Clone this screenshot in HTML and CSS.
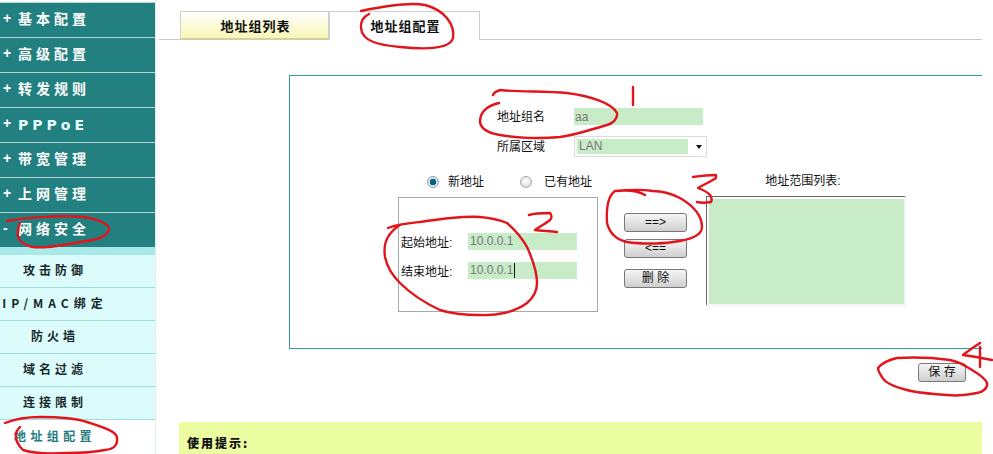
FILE: index.html
```html
<!DOCTYPE html>
<html lang="zh-CN">
<head>
<meta charset="utf-8">
<title>地址组配置</title>
<link rel="stylesheet" href="styles.css">
</head>
<body>
<div class="page">
  <nav class="sidebar">
    <a class="nav-item"><span class="sign">+</span><span>基本配置</span></a>
    <a class="nav-item"><span class="sign">+</span><span>高级配置</span></a>
    <a class="nav-item"><span class="sign">+</span><span>转发规则</span></a>
    <a class="nav-item"><span class="sign">+</span><span class="latin">PPPoE</span></a>
    <a class="nav-item"><span class="sign">+</span><span>带宽管理</span></a>
    <a class="nav-item"><span class="sign">+</span><span>上网管理</span></a>
    <a class="nav-item"><span class="sign">-</span><span>网络安全</span></a>
    <div class="nav-band"></div>
    <a class="sub-item">攻击防御</a>
    <a class="sub-item wide-text">IP/MAC绑定</a>
    <a class="sub-item">防火墙</a>
    <a class="sub-item">域名过滤</a>
    <a class="sub-item">连接限制</a>
    <a class="sub-item current">地址组配置</a>
  </nav>
  <main class="content">
    <div class="tabs">
      <a class="tab inactive">地址组列表</a>
      <a class="tab active">地址组配置</a>
    </div>
    <section class="panel">
      <div class="row name-row">
        <label class="field-label">地址组名</label>
        <input class="name-input" type="text" value="aa">
      </div>
      <div class="row zone-row">
        <label class="field-label">所属区域</label>
        <div class="select"><span class="select-value">LAN</span><span class="select-arrow"></span></div>
      </div>
      <div class="columns">
        <div class="col-left">
          <div class="radios">
            <span class="radio on"></span><span class="radio-text first">新地址</span>
            <span class="radio"></span><span class="radio-text">已有地址</span>
          </div>
          <div class="addr-box">
            <div class="addr-row"><label>起始地址:</label><input class="addr-input" type="text" value="10.0.0.1"></div>
            <div class="addr-row"><label>结束地址:</label><div class="addr-input caret-field">10.0.0.1<i class="caret"></i></div></div>
          </div>
        </div>
        <div class="col-buttons">
          <button class="btn" type="button">==&gt;</button>
          <button class="btn" type="button">&lt;==</button>
          <button class="btn wide" type="button">删 除</button>
        </div>
        <div class="col-list">
          <div class="list-title">地址范围列表:</div>
          <div class="list-box"></div>
        </div>
      </div>
    </section>
    <div class="save-row"><button class="btn save" type="button">保 存</button></div>
    <div class="tips"><strong>使用提示:</strong></div>
  </main>
</div>
<svg class="marks" width="993" height="454" viewBox="0 0 993 454" fill="none" stroke="#e2141c" stroke-width="2.4" stroke-linecap="round" stroke-linejoin="round" aria-hidden="true">
  <path d="M361 11C380 7 410 2 425 5C445 10 455 25 453 38C450 50 420 49 400 47C380 45 362 42 361 28C360 20 365 16 369 14"/>
  <path d="M7 221C20 218 60 215 83 217C98 219 110 224 109 230C106 238 95 240 80 242C60 246 40 248 33 247C22 245 16 238 18 232C18 228 19 225 20 223"/>
  <path d="M5 423C15 419 28 417 40 417C60 417 78 419 87 422C102 427 117 431 117 438C118 445 114 449 105 450C90 453 75 453 67 453C50 454 32 453 23 450C17 444 15 438 16 433C17 430 19 428 20 427"/>
  <path d="M493 95C494 92 497 91 500 90C520 92 545 91 567 93C590 96 612 103 617 113C618 119 612 124 607 125C590 130 575 135 560 137C540 139 515 138 500 135C488 133 481 129 480 122C480 115 483 111 487 108C491 105 495 104 499 103"/>
  <path d="M633 87L633 105"/>
  <path d="M693 177C700 176 710 175 716 175L716 178C710 182 703 185 698 188C703 190 708 192 710 195C712 198 712 200 711 202C706 203 701 203 697 202"/>
  <path d="M615 191C625 190 637 190 645 195M615 191C609 195 606 205 607 223C610 235 618 240 627 242C640 244 660 244 673 242C690 240 702 236 702 227C702 215 692 205 680 198C670 193 660 191 653 191C640 189 625 190 615 191"/>
  <path d="M529 215C535 213 544 213 550 213C552 215 552 218 550 220C545 224 539 227 535 230C541 231 550 231 557 232"/>
  <path d="M388 228C398 224 410 223 420 222C440 219 465 216 480 217C492 218 500 220 507 223C515 230 522 238 527 247C532 258 537 270 537 283C537 292 533 298 527 303C515 312 497 316 480 315C465 315 452 314 440 310C425 303 410 293 400 283C392 275 387 267 385 257C384 250 385 242 388 237C391 232 395 228 400 225"/>
  <path d="M980 343C974 347 968 351 963 355C972 356 982 358 992 360M980 347L980 367"/>
  <path d="M878 368C882 363 888 360 897 358C915 357 935 358 950 360C958 362 963 364 967 367C975 372 985 377 987 383C988 388 983 392 977 393C968 395 957 396 947 395C932 394 918 393 907 390C895 387 885 383 882 377C880 374 878 371 878 368"/>
</svg>
</body>
</html>
```
FILE: styles.css
```css
* { box-sizing: border-box; }
html, body { margin: 0; height: 454px; overflow: hidden; background: #fff; }
body { font: 12px "Liberation Sans", "Noto Sans CJK SC", sans-serif; color: #111; }
.page { display: flex; width: 993px; height: 454px; overflow: hidden; }

.sidebar { width: 156px; flex: none; display: flex; flex-direction: column; padding-top: 2px; border-right: 1px solid #dfeeee; }
.nav-item { flex: none; height: 35px; display: flex; align-items: center; background: #238080; border-top: 1px solid #b6d6d6; color: #fff; font: bold 14px "Noto Sans CJK SC", sans-serif; letter-spacing: 4px; padding: 0 0 4px 3px; }
.sign { width: 15px; letter-spacing: 0; font-family: "Liberation Sans", sans-serif; }
.latin { font-family: "DejaVu Sans", sans-serif; font-size: 14px; letter-spacing: 4px; color: #e6fbfb; position: relative; top: 2px; }
.nav-band { flex: none; height: 8px; background: #a9e8e8; }
.sub-item { flex: none; height: 33px; display: flex; align-items: center; justify-content: center; background: #dcfcfc; border-bottom: 1px solid #9fdcdc; color: #16282a; font: bold 12px "Noto Sans CJK SC", sans-serif; letter-spacing: 4px; white-space: nowrap; padding: 0 45px 3px 0; }
.sub-item.wide-text { letter-spacing: 5px; }
.sub-item.current { background: #fff; border-bottom: 0; color: #1f7d80; letter-spacing: 4.4px; }

.content { flex: none; width: 826px; padding: 11px 0 0 23px; display: flex; flex-direction: column; }
.tabs { height: 29px; margin-left: -20px; padding-left: 21px; display: flex; align-items: stretch; border-bottom: 1px solid #c8c8c8; flex: none; }
.tab { width: 150px; height: 29px; display: flex; align-items: center; justify-content: center; padding-left: 2px; font: bold 13px "Noto Sans CJK SC", sans-serif; letter-spacing: 1px; color: #111; border: 1px solid #cfcfcf; }
.tab.inactive { background: linear-gradient(#fff, #f9f7b5); border-bottom: 2px solid #d2d0a8; border-right: 2px solid #cfcfcf; }
.tab.active { background: #fff; border-left: 0; border-bottom: 1px solid #fff; }

.panel { flex: none; margin: 35px 0 0 110px; height: 274px; border: 1px solid #2f9f9a; border-right: 0; padding-top: 32px; }
.row { display: flex; align-items: center; margin-left: 207px; }
.field-label { width: 77px; flex: none; font-size: 12px; color: #111; position: relative; top: -1px; }
.name-row { height: 17px; }
.name-input { width: 129px; height: 17px; border: 0; padding: 0 1px; margin: 0; outline: 0; background: #c8ecc8; color: #777; font: 12px "Liberation Sans", sans-serif; }
.zone-row { height: 21px; margin-top: 11px; }
.select { width: 133px; height: 21px; display: flex; align-items: center; padding: 2px 0 2px 2px; border: 1px solid #dcdcdc; background: #fff; }
.select-value { width: 111px; height: 15px; line-height: 15px; padding-left: 2px; background: #c8ecc8; color: #777; font: 12px/15px "Liberation Sans", sans-serif; }
.select-arrow { margin-left: 8px; width: 0; height: 0; border: 3.5px solid transparent; border-top: 4px solid #111; border-bottom: 0; }

.columns { display: flex; margin-top: 18px; margin-left: 108px; }
.col-left { width: 200px; flex: none; }
.radios { height: 22px; display: flex; align-items: flex-start; padding-left: 29px; }
.radio { width: 12px; height: 12px; margin-top: 1px; border-radius: 50%; border: 1px solid #a8a8a8; background: radial-gradient(circle at 50% 40%, #fff, #d4d4d4); flex: none; }
.radio.on { background: radial-gradient(circle, #0d5f82 0 3px, #dbe8ee 3.6px); border-color: #8aa0aa; }
.radio-text { margin-left: 12px; line-height: 15px; font-size: 12px; }
.radio-text.first { margin-left: 9px; width: 72px; flex: none; }
.addr-box { width: 200px; height: 115px; border: 1px solid #a8a8a8; padding-top: 35px; display: flex; flex-direction: column; gap: 12px; }
.addr-row { display: flex; align-items: center; height: 17px; padding-left: 2px; }
.addr-row label { width: 67px; flex: none; font-size: 12px; white-space: nowrap; }
.addr-input { width: 109px; height: 17px; border: 0; margin: 0; padding: 0 2px; outline: 0; background: #c8ecc8; color: #777; font: 12px/17px "Liberation Sans", sans-serif; }
.caret-field { display: flex; align-items: center; }
.caret { display: block; width: 1px; height: 15px; margin-left: 1px; background: #111; }

.col-buttons { width: 108px; flex: none; padding: 38px 0 0 26px; display: flex; flex-direction: column; align-items: flex-start; }
.btn { width: 63px; height: 19px; padding: 0; border: 1px solid #777; border-radius: 3px; background: linear-gradient(#f6f6f6, #cfcfcf); color: #111; font: 12px/15px "Liberation Sans", "Noto Sans CJK SC", sans-serif; }
.col-buttons .btn + .btn { margin-top: 7px; }
.col-buttons .btn.wide { margin-top: 11px; }
.col-list { width: 200px; flex: none; }
.list-title { height: 22px; margin-top: -1px; text-align: center; line-height: 15px; font-size: 12px; margin-left: -6px; }
.list-box { width: 200px; height: 110px; border-top: 1px solid #666; border-left: 1px solid #666; border-right: 2px solid #f4f4f4; border-bottom: 2px solid #f4f4f4; padding: 2px 0 0 2px; background: #c8ecc8 content-box; }

.save-row { flex: none; display: flex; justify-content: flex-end; padding-right: 16px; margin-top: 14px; }
.btn.save { width: 48px; }
.tips { flex: none; margin: 40px 0 0 0; width: 803px; height: 32px; background: #ecfca0; padding: 11px 0 0 8px; font: bold 12px/20px "Noto Sans CJK SC", sans-serif; letter-spacing: 2px; }

.marks { position: absolute; left: 0; top: 0; pointer-events: none; }
```
